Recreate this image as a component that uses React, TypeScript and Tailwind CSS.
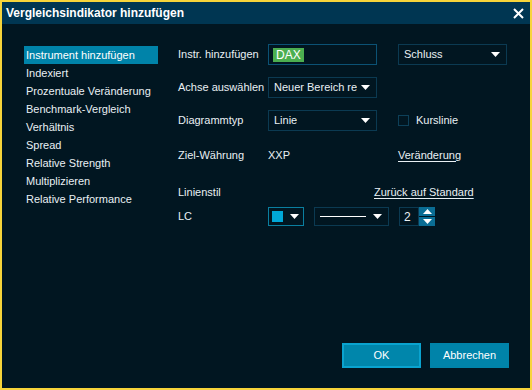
import React from "react";

const navItems = [
  "Instrument hinzufügen",
  "Indexiert",
  "Prozentuale Veränderung",
  "Benchmark-Vergleich",
  "Verhältnis",
  "Spread",
  "Relative Strength",
  "Multiplizieren",
  "Relative Performance",
];

const Caret = () => (
  <svg width="9" height="5" viewBox="0 0 9 5" className="shrink-0">
    <path d="M0 0h9L4.5 5z" fill="#ffffff" />
  </svg>
);

function Select({ value, className = "" }: { value: string; className?: string }) {
  return (
    <div
      className={`flex h-[21px] items-center justify-between overflow-hidden border border-[#0b3a52] pl-[5px] pr-[6px] ${className}`}
    >
      <span className="overflow-hidden whitespace-nowrap">{value}</span>
      <Caret />
    </div>
  );
}

export default function App() {
  return (
    <div
      className="flex h-[390px] w-[532px] flex-col whitespace-nowrap border-2 border-[#f7d43a] text-[11px] text-[#e9f0f4]"
      style={{ fontFamily: '"Liberation Sans", Arial, sans-serif' }}
    >
      {/* title bar */}
      <div className="flex h-[22px] items-center justify-between bg-[#003652] pl-[4px] pr-[6px]">
        <span className="text-[12px] font-bold text-white">Vergleichsindikator hinzufügen</span>
        <svg width="11" height="11" viewBox="0 0 11 11">
          <path d="M1 1l9 9M10 1l-9 9" stroke="#ffffff" strokeWidth="2" />
        </svg>
      </div>

      <div className="flex flex-1 flex-col bg-[#011621]">
        <div className="flex pt-[20px]">
          {/* left nav */}
          <div className="ml-[22px] mt-[2px] flex w-[134px] flex-col">
            {navItems.map((item, i) => (
              <div
                key={item}
                className={`flex h-[18px] items-center pl-[2px] ${i === 0 ? "bg-[#0083a9] text-white" : ""}`}
              >
                {item}
              </div>
            ))}
          </div>

          {/* form */}
          <div className="ml-[20px] flex flex-col">
            <div className="flex h-[21px] items-center">
              <span className="w-[90px]">Instr. hinzufügen</span>
              <div className="flex h-[21px] w-[109px] items-center border border-[#0b5275] pl-[4px]">
                <span className="flex h-[14px] items-center bg-[#4caf50] px-[3px] text-[12px] text-white">DAX</span>
              </div>
              <Select value="Schluss" className="ml-[21px] w-[109px]" />
            </div>

            <div className="mt-[12px] flex h-[21px] items-center">
              <span className="w-[90px]">Achse auswählen</span>
              <Select value="Neuer Bereich re" className="w-[109px]" />
            </div>

            <div className="mt-[12px] flex h-[21px] items-center">
              <span className="w-[90px]">Diagrammtyp</span>
              <Select value="Linie" className="w-[109px]" />
              <div className="ml-[21px] flex items-center">
                <div className="h-[11px] w-[11px] border border-[#0d4059]" />
                <span className="ml-[7px]">Kurslinie</span>
              </div>
            </div>

            <div className="mt-[15px] flex h-[18px] items-center">
              <span className="w-[90px]">Ziel-Währung</span>
              <span className="w-[130px]">XXP</span>
              <span className="underline underline-offset-2">Veränderung</span>
            </div>

            <div className="mt-[19px] flex h-[18px] items-center">
              <span className="w-[196px]">Linienstil</span>
              <span className="underline underline-offset-2">Zurück auf Standard</span>
            </div>

            <div className="mt-[6px] flex h-[19px] items-center">
              <span className="w-[90px]">LC</span>
              <div className="flex h-[19px] w-[36px] items-center justify-between border border-[#0a7fa0] pl-[3px] pr-[4px]">
                <div className="h-[11px] w-[11px] bg-[#00a8d8]" />
                <Caret />
              </div>
              <div className="ml-[10px] flex h-[19px] w-[75px] items-center justify-between border border-[#0b3a52] pl-[5px] pr-[6px]">
                <div className="h-px w-[46px] bg-white" />
                <Caret />
              </div>
              <div className="ml-[10px] flex h-[19px] items-stretch">
                <div className="flex w-[20px] items-center border border-[#0b3a52] pl-[4px] text-[12px]">2</div>
                <div className="flex w-[16px] flex-col justify-between">
                  <div className="flex h-[9px] items-center justify-center bg-[#0a6d94]">
                    <svg width="9" height="5" viewBox="0 0 9 5">
                      <path d="M0 5h9L4.5 0z" fill="#ffffff" />
                    </svg>
                  </div>
                  <div className="flex h-[9px] items-center justify-center bg-[#0a6d94]">
                    <Caret />
                  </div>
                </div>
              </div>
            </div>
          </div>
        </div>

        <div className="flex-1" />

        <div className="flex justify-end gap-[9px] pb-[20px] pr-[21px]">
          <button className="h-[25px] w-[79px] border-2 border-[#0aa3cf] bg-[#0086ab] text-white">OK</button>
          <button className="h-[25px] w-[79px] bg-[#0083a9] text-white">Abbrechen</button>
        </div>
      </div>
    </div>
  );
}
